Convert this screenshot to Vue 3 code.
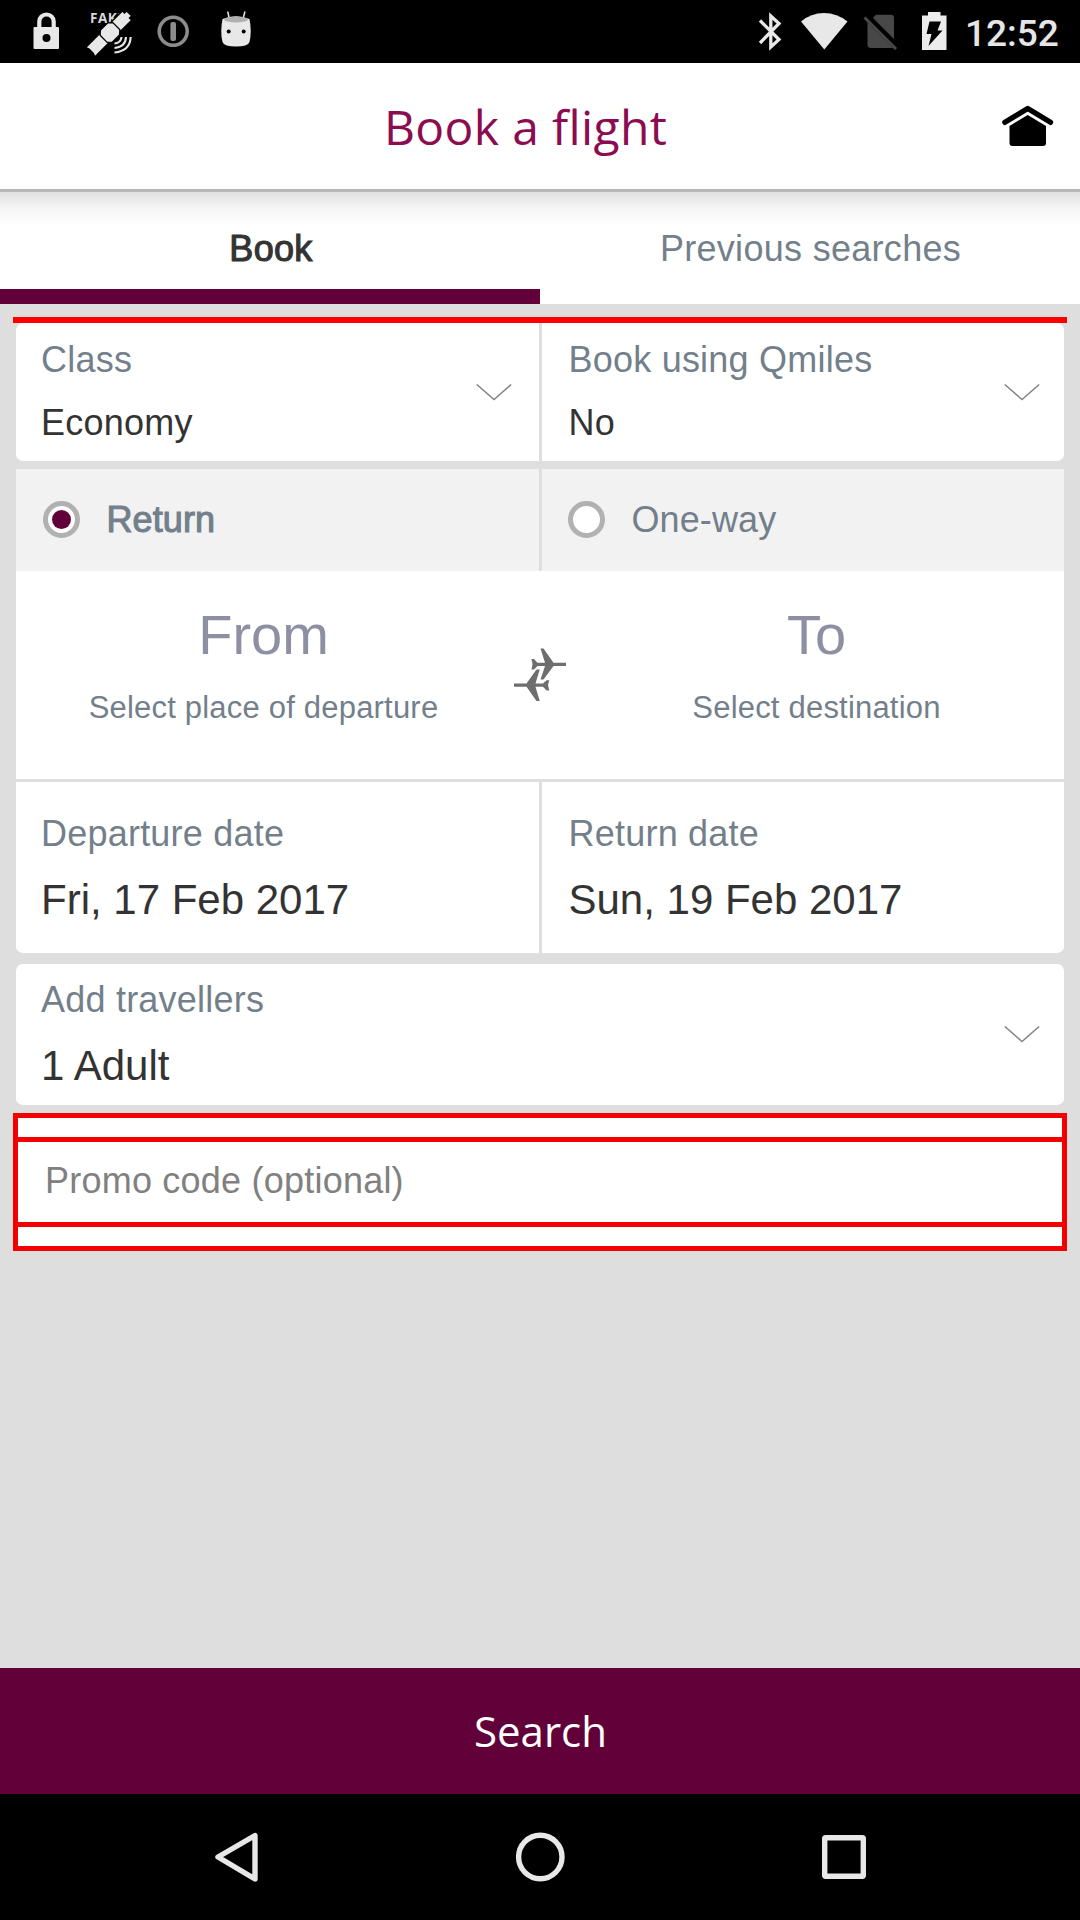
<script setup>
import { ref } from 'vue'

const tripType = ref('return')
const trips = [
  { id: 'return', label: 'Return' },
  { id: 'oneway', label: 'One-way' }
]
const options = [
  { label: 'Class', value: 'Economy' },
  { label: 'Book using Qmiles', value: 'No' }
]
const dates = [
  { label: 'Departure date', value: 'Fri, 17 Feb 2017' },
  { label: 'Return date', value: 'Sun, 19 Feb 2017' }
]
</script>

<template>
  <div class="screen">
    <div class="status">
      <div class="status-left">
        <svg class="lock" width="28" height="38" viewBox="32 12 28 38">
          <path d="M39.3 28v-6.500a7.200 7 0 0 1 14.400 0V28" fill="none" stroke="#e8e8e8" stroke-width="4.200" />
          <rect x="33.500" y="27" width="25.500" height="22" rx="1" fill="#e8e8e8" />
          <circle cx="46.500" cy="38" r="4" fill="#000" />
        </svg>
        <svg class="satellite" width="46" height="46" viewBox="87 10 46 46">
          <text x="90" y="23" class="fake">FAKE</text>
          <g fill="#e8e8e8" stroke="#000" stroke-width="1.300" transform="translate(110 32.500) rotate(-45)">
            <path d="M-28 -6.500H-8V6.500H-28L-26.500 3V-3Z" />
            <path d="M8 -6.500H24V-3.500H27V3.500H24V6.500H8Z" />
            <path d="M-5 -8.500H5L9 -5V5L5 8.500H-5L-9 5V-5Z" />
          </g>
          <g fill="none" stroke="#e8e8e8" stroke-width="2.100">
            <path d="M114.500 43.500Q121 43 121.500 37" />
            <path d="M114.500 48Q125.500 47 126 37" />
            <path d="M114.500 52.500Q130 51 130.700 37" />
          </g>
        </svg>
        <svg class="info" width="32" height="32" viewBox="157 15 32 32">
          <circle cx="173.200" cy="31.300" r="14" fill="none" stroke="#8c8c8c" stroke-width="3.600" />
          <rect x="170.400" y="22" width="5.600" height="19" rx="2" fill="#8c8c8c" />
        </svg>
        <svg class="droid" width="32" height="38" viewBox="220 10 32 38">
          <path d="M227.700 11.500L229.300 18.500M245 11.500L243 18.500" stroke="#e8e8e8" stroke-width="1.500" />
          <path d="M222.500 19Q236 13.500 249.500 19Q252 32 249.500 42Q248 46.500 236 46.500Q224 46.500 222.500 42Q220 32 222.500 19Z" fill="#e8e8e8" />
          <ellipse cx="236" cy="19.500" rx="12" ry="3" fill="#b0b0b0" />
          <circle cx="228.700" cy="31.500" r="2" fill="#000" /><circle cx="243.700" cy="31.500" r="2" fill="#000" />
        </svg>
      </div>
      <div class="status-right">
        <svg width="24" height="40" viewBox="758 12 24 40">
          <path d="M760 20.500L779 39.500L770.800 47V16L779 23.500L760 43" fill="none" stroke="#e8e8e8" stroke-width="3.300" />
        </svg>
        <svg class="wifi" width="48" height="38" viewBox="800 12 48 38">
          <path d="M801 21.500Q811 13 824 13Q837 13 847.500 21.500L824.300 49.500Z" fill="#e8e8e8" />
        </svg>
        <svg class="nosim" width="36" height="38" viewBox="862 13 36 38">
          <path d="M867.500 23.500L876 14.700H891Q894 14.700 894 18V48H871Q867.500 48 867.500 45Z" fill="#484848" />
          <path d="M864.500 17.500L896 49" stroke="#000" stroke-width="7" transform="translate(1.500 -1.500)" />
          <path d="M864.500 17.500L896 49" stroke="#484848" stroke-width="3" />
        </svg>
        <svg class="battery" width="26" height="40" viewBox="921 11 26 40">
          <path d="M922 15.500H928V12H940.500V15.500H946.500V50H922Z" fill="#ececec" />
          <path d="M929.500 21.500H941L937.500 30.500H942.500L928.500 46L931.500 34H926.500Z" fill="#000" />
        </svg>
        <span class="clock">12:52</span>
      </div>
    </div>

    <header class="header">
      <h1>Book a flight</h1>
      <svg class="home" width="52" height="42" viewBox="1002 105 52 42">
        <path d="M1004.900 122.300L1027.700 108.500L1050.500 122.300" fill="none" stroke="#000" stroke-width="5.400" stroke-linecap="round" stroke-linejoin="round" />
        <path d="M1027.700 115L1046 126V143Q1046 146 1043 146H1012.500Q1009.500 146 1009.500 143V126Z" fill="#000" />
      </svg>
    </header>

    <nav class="tabs">
      <div class="tab active">Book</div>
      <div class="tab">Previous searches</div>
    </nav>

    <main class="form">
      <div class="error-line"></div>
      <section class="card options">
        <div v-for="o in options" :key="o.label" class="cell">
          <div>
            <div class="label">{{ o.label }}</div>
            <div class="value">{{ o.value }}</div>
          </div>
          <svg class="chevron" width="36" height="17" viewBox="0 0 36 17"><path d="M.8 .5L18 15.500L35.200 .5" /></svg>
        </div>
      </section>

      <section class="card trip">
        <div class="row radios">
          <div v-for="t in trips" :key="t.id" class="radio" :class="{ on: tripType === t.id }" @click="tripType = t.id">
            <span class="ring"><i v-if="tripType === t.id"></i></span>
            <span class="radio-label">{{ t.label }}</span>
          </div>
        </div>
        <div class="route">
          <div class="place">
            <div class="big">From</div>
            <div class="hint">Select place of departure</div>
          </div>
          <svg class="planes" width="58" height="54" viewBox="511 647.500 58 54">
            <g fill="#6e6e6e">
              <path d="M566 662.200V665.400H553.500L543.500 679H540.500L545 665.400H537.500L534 669H531.500L532.500 663.800L531.500 658.500H534L537.500 662.200H545L540.500 648H543.500L553.500 662.200Z" />
              <path d="M514 683V686.200H526.500L536.500 700.500H539.700L535.500 686.200H543L546.500 690H549.300L548 684.600L549.300 679.800H546.500L543 683H535.500L539.700 669H536.500L526.500 683Z" />
            </g>
          </svg>
          <div class="place">
            <div class="big">To</div>
            <div class="hint">Select destination</div>
          </div>
        </div>
        <div class="row dates">
          <div v-for="d in dates" :key="d.label" class="cell">
            <div>
              <div class="label">{{ d.label }}</div>
              <div class="value large">{{ d.value }}</div>
            </div>
          </div>
        </div>
      </section>

      <section class="card travellers">
        <div class="cell">
          <div>
            <div class="label">Add travellers</div>
            <div class="value large">1 Adult</div>
          </div>
          <svg class="chevron" width="36" height="17" viewBox="0 0 36 17"><path d="M.8 .5L18 15.500L35.200 .5" /></svg>
        </div>
      </section>

      <section class="promo">
        <div class="promo-field">Promo code (optional)</div>
      </section>
    </main>

    <div class="search">Search</div>

    <div class="navbar">
      <svg width="46" height="52" viewBox="213 1831.500 46 52"><path d="M218 1857.500L255 1836V1879.500Z" /></svg>
      <svg width="52" height="52" viewBox="514 1831.500 52 52"><circle cx="540.300" cy="1857.500" r="21.700" /></svg>
      <svg width="46" height="52" viewBox="821 1831.500 46 52"><rect x="824.700" y="1838.200" width="38.600" height="38.600" rx="1" /></svg>
    </div>
  </div>
</template>

<style>
body { margin: 0; background: #dedede; }
</style>

<style scoped>
.screen {
  width: 1080px;
  height: 1920px;
  display: flex;
  flex-direction: column;
  overflow: hidden;
  background: #dedede;
  font-family: "Liberation Sans", Arial, sans-serif;
  font-size: 36px;
  line-height: 41px;
  letter-spacing: .22px;
  color: #333;
}
.screen * { box-sizing: border-box; }
svg { display: block; flex: none; }

.status {
  height: 63px;
  flex: none;
  background: #000;
  display: flex;
  justify-content: space-between;
}
.status-left, .status-right { display: flex; align-items: flex-start; }
.lock { margin: 12px 0 0 32px; }
.satellite { margin: 10px 0 0 27px; }
.info { margin: 15px 0 0 24px; }
.droid { margin: 10px 0 0 31px; }
.fake { font: bold 13.500px "Open Sans", sans-serif; fill: #d8d8d8; letter-spacing: .5px; }
.status-right { padding-right: 21px; }
.status-right svg { margin-top: 12px; }
.status-right .wifi { margin-left: 18px; }
.status-right .nosim { margin: 13px 0 0 14px; }
.status-right .battery { margin: 11px 0 0 23px; }
.clock {
  width: 94px;
  margin-left: 18px;
  padding-top: 13px;
  font: 500 37px/41px Roboto, sans-serif;
  letter-spacing: 0;
  color: #e6e6e6;
  white-space: nowrap;
}

.header {
  height: 129px;
  flex: none;
  display: flex;
  align-items: center;
  justify-content: space-between;
  padding: 0 26px 0 384px;
  background: #fff;
  border-bottom: 3px solid #b7b7b7;
}
h1 {
  margin: 2px 0 0;
  font: 400 48px/66px "Open Sans", sans-serif;
  letter-spacing: .36px;
  color: #8b0c50;
}

.tabs {
  height: 112px;
  flex: none;
  display: flex;
  background: linear-gradient(#e0e0e0, #f3f3f3 14px, #fff 32px);
}
.tab {
  width: 540px;
  flex: none;
  padding: 36px 0 0 1px;
  text-align: center;
  color: #737f8b;
  letter-spacing: .3px;
}
.tab.active {
  padding-left: 2px;
  color: #333;
  border-bottom: 15px solid #62003a;
  -webkit-text-stroke: 1.100px #333;
}

.form {
  flex: 1;
  padding: 13px 13px 0;
  display: flex;
  flex-direction: column;
}
.error-line { height: 6px; background: #f00; }
.card {
  margin: 0 3px;
  border-radius: 7px;
  overflow: hidden;
}
.options, .row {
  display: grid;
  grid-template-columns: 523px 1fr;
  column-gap: 2.500px;
}
.options { height: 138px; }
.cell {
  display: flex;
  justify-content: space-between;
  padding: 16px 24px 0 25px;
  background: #fff;
}
.cell + .cell { padding-left: 27px; }
.label { color: #737f8b; }
.value { margin-top: 22px; }
.large { font-size: 42px; line-height: 47px; letter-spacing: 0; }
.chevron { margin-top: 45px; }
.options .cell:first-child { padding-right: 27px; }
.chevron path { fill: none; stroke: #858585; stroke-width: 1.500; }

.trip { margin-top: 8px; border-radius: 0 0 7px 7px; }
.radios { height: 102px; }
.radio {
  display: flex;
  padding: 30px 0 0 26px;
  background: #f2f2f2;
  color: #737f8b;
  letter-spacing: .1px;
}
.radio.on { padding-left: 26.500px; -webkit-text-stroke: 1.100px #737f8b; }
.ring {
  width: 37px;
  height: 37px;
  margin: 2px 27px 0 0;
  border: 5px solid #b1b1b1;
  border-radius: 50%;
  background: #fff;
  display: flex;
  align-items: center;
  justify-content: center;
}
.ring i { width: 19px; height: 19px; border-radius: 50%; background: #62003a; }
.route {
  height: 208px;
  display: flex;
  background: #fff;
}
.place { flex: 1; text-align: center; padding-top: 32px; }
.big { font-size: 56px; line-height: 63px; color: #8f8fa3; letter-spacing: 0; }
.hint { margin-top: 24px; font-size: 31px; line-height: 35px; color: #737f8b; letter-spacing: .2px; }
.planes { margin-top: 76.500px; }
.dates { height: 171px; margin-top: 3px; }
.dates .cell { padding-top: 31px; }

.travellers { height: 141px; margin-top: 11px; }
.travellers .cell { height: 100%; padding-top: 15px; }
.travellers .chevron { margin-top: 47px; }

.promo {
  height: 138px;
  margin-top: 8px;
  border: 5px solid #f50000;
  background: #fff;
}
.promo-field {
  height: 90px;
  margin-top: 19px;
  padding: 18px 27px 0;
  border-top: 5px solid #f50000;
  border-bottom: 5px solid #f50000;
  color: #808080;
}

.search {
  height: 126px;
  flex: none;
  padding-left: 1px;
  background: #62003a;
  color: #fff;
  text-align: center;
  letter-spacing: 0;
  font: 400 42px/126px "Open Sans", sans-serif;
}
.navbar {
  height: 126px;
  flex: none;
  background: #000;
  display: flex;
  align-items: center;
  justify-content: space-between;
  padding: 0 213px;
}
.navbar path, .navbar circle, .navbar rect {
  fill: none;
  stroke: #e8e8e8;
  stroke-width: 5.400;
  stroke-linejoin: round;
}
</style>
